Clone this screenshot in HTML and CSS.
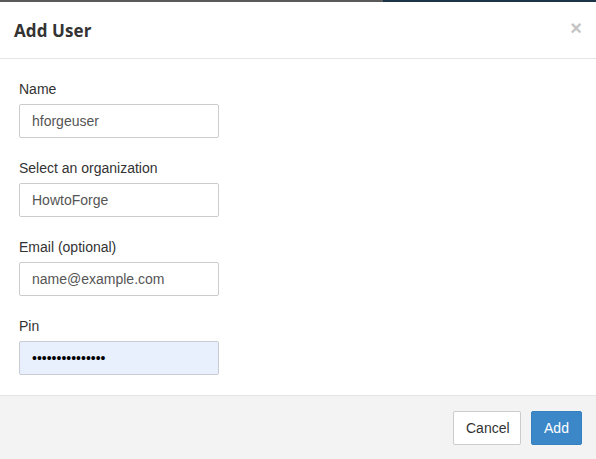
FILE: index.html
```html
<!DOCTYPE html>
<html>
<head>
<meta charset="utf-8">
<link rel="stylesheet" href="styles.css">
</head>
<body>
<div class="topbar"><div class="tb-gray"></div><div class="tb-navy"></div></div>
<div class="modal">
  <div class="modal-header">
    <h4 class="title">Add User</h4>
    <span class="close">&times;</span>
  </div>
  <div class="modal-body">
    <div class="group">
      <label class="label">Name</label>
      <input class="input" type="text" value="hforgeuser">
    </div>
    <div class="group">
      <label class="label">Select an organization</label>
      <input class="input" type="text" value="HowtoForge">
    </div>
    <div class="group">
      <label class="label">Email (optional)</label>
      <input class="input" type="text" value="name@example.com">
    </div>
    <div class="group">
      <label class="label">Pin</label>
      <input class="input autofill" type="password" value="123456789012345">
    </div>
  </div>
  <div class="modal-footer">
    <button class="btn btn-default">Cancel</button>
    <button class="btn btn-primary">Add</button>
  </div>
</div>
</body>
</html>
```
FILE: styles.css
```css
html, body {
  margin: 0;
  padding: 0;
  background: #fff;
}
body {
  width: 596px;
  height: 459px;
  overflow: hidden;
  font-family: "Liberation Sans", Arial, sans-serif;
  font-size: 14px;
  color: #333;
}
.topbar {
  display: flex;
  height: 2px;
}
.tb-gray {
  width: 383px;
  background: #5a5a5a;
}
.tb-navy {
  flex: 1;
  background: #1c3447;
}
.modal {
  display: flex;
  flex-direction: column;
  height: 457px;
}
.modal-header {
  flex-shrink: 0;
  height: 57px;
  box-sizing: border-box;
  border-bottom: 1px solid #e5e5e5;
  display: flex;
  align-items: center;
  justify-content: space-between;
  padding: 0 14px 0 14px;
}
.title {
  margin: 0;
  font-family: "Open Sans", "Noto Sans", sans-serif;
  font-weight: 700;
  font-size: 17px;
  color: #333;
  letter-spacing: 0.1px;
}
.close {
  font-family: "Liberation Sans", Arial, sans-serif;
  font-size: 20px;
  font-weight: 700;
  color: #c4c4c4;
  line-height: 1;
  margin-top: -5px;
  margin-right: 0;
}
.modal-body {
  flex-shrink: 0;
  padding: 20px 19px 0 19px;
  height: 337px;
  box-sizing: border-box;
  border-bottom: 1px solid #e5e5e5;
}
.group {
  display: flex;
  flex-direction: column;
  margin-bottom: 20px;
}
.label {
  line-height: 20px;
  margin-bottom: 5px;
  color: #333;
}
.input {
  width: 200px;
  height: 34px;
  box-sizing: border-box;
  border: 1px solid #ccc;
  border-radius: 2px;
  padding: 6px 12px;
  font-family: "Liberation Sans", Arial, sans-serif;
  font-size: 14px;
  color: #555;
  background: #fff;
  outline: none;
}
.input.autofill {
  background: #e8f0fe;
  border-color: #c8ccd2;
  color: #000;
}
.modal-footer {
  flex: 1;
  background: #f3f3f3;
  display: flex;
  justify-content: flex-end;
  align-items: flex-start;
  gap: 10px;
  padding: 15px 14px 0 0;
}
.btn {
  height: 34px;
  padding: 6px 12px;
  font-family: "Liberation Sans", Arial, sans-serif;
  font-size: 14px;
  border-radius: 2px;
  border: 1px solid #ccc;
  cursor: pointer;
}
.btn-default {
  background: #fff;
  color: #333;
  width: 68px;
}
.btn-primary {
  background: #3b87c8;
  border-color: #3580c0;
  color: #fff;
  width: 51px;
}
```
